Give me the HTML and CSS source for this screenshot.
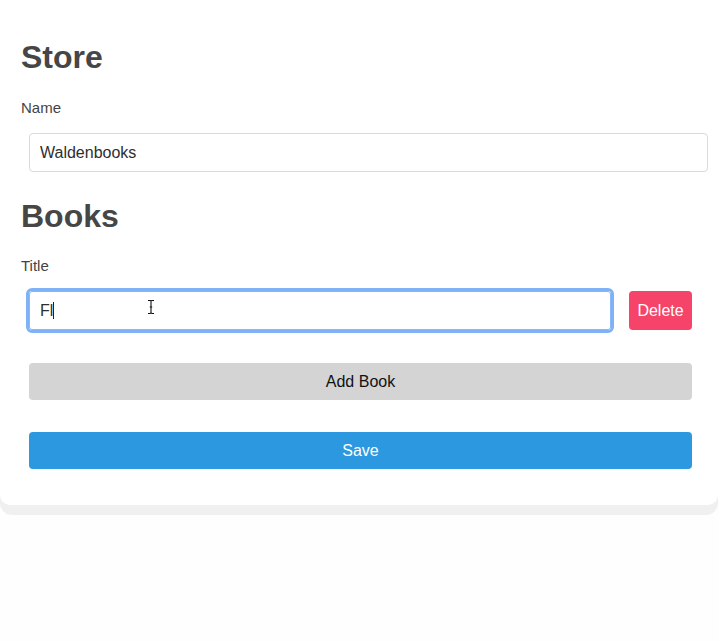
FILE: index.html
```html
<!DOCTYPE html>
<html lang="en">
<head>
<meta charset="utf-8">
<title>Store</title>
<link rel="stylesheet" href="styles.css">
</head>
<body>
<div class="card-shell">
<div class="card">
  <h2 class="heading">Store</h2>
  <label class="label label-name">Name</label>
  <input class="field field-wide" type="text" value="Waldenbooks">
  <h2 class="heading heading-books">Books</h2>
  <label class="label">Title</label>
  <div class="book-row">
    <div class="field-wrap">
      <input class="field field-focused" type="text" value="Fl">
      <span class="caret"></span>
      <svg class="ibeam" width="8" height="16" viewBox="0 0 8 16" aria-hidden="true">
        <path d="M1 1.5h2.2L4 2.3l.8-.8H7M4 2.3v11.4M1 14.5h2.2l.8-.8.8.8H7M2.8 8h2.4" fill="none" stroke="#111" stroke-width="1.1"/>
      </svg>
    </div>
    <button class="btn btn-delete" type="button">Delete</button>
  </div>
  <button class="btn btn-add" type="button">Add Book</button>
  <button class="btn btn-save" type="button">Save</button>
</div>
</div>
</body>
</html>
```

FILE: styles.css
```css
html, body {
  margin: 0;
  padding: 0;
  background: #fefefe;
  font-family: "Liberation Sans", Arial, Helvetica, sans-serif;
}

.card-shell {
  width: 718px;
  padding-bottom: 10px;
  background: #f0f0f0;
  border-radius: 0 0 12px 12px;
}

.card {
  box-sizing: border-box;
  background: #ffffff;
  border-radius: 0 0 10px 10px;
  padding: 38px 0 36px 21px;
  display: flex;
  flex-direction: column;
  align-items: flex-start;
}

.heading {
  margin: 0;
  font-size: 32px;
  line-height: 38px;
  font-weight: bold;
  color: #464646;
}

.heading-books {
  margin-top: 25px;
}

.label {
  display: block;
  margin-top: 21px;
  font-size: 15px;
  line-height: 18px;
  color: #444444;
}

.label-name {
  margin-top: 23px;
}

.heading-books + .label {
  margin-top: 22px;
}

.field {
  box-sizing: border-box;
  height: 39px;
  margin: 0;
  padding: 0 10px;
  border: 1px solid #dadada;
  border-radius: 4px;
  font-family: "Liberation Sans", Arial, Helvetica, sans-serif;
  font-size: 16px;
  color: #2e2e2e;
  background: #fff;
}

.field-wide {
  margin-top: 16px;
  margin-left: 8px;
  width: 679px;
}

.book-row {
  margin-top: 16px;
  margin-left: 8px;
  display: flex;
  gap: 18px;
}

.field-wrap {
  position: relative;
}

.field-focused {
  width: 582px;
  border-color: #8ab8f6;
  outline: 3px solid #7fb1f7;
  outline-offset: 0;
  border-radius: 3px;
}

.caret {
  position: absolute;
  left: 24px;
  top: 11px;
  width: 1px;
  height: 17px;
  background: #222;
}

.ibeam {
  position: absolute;
  left: 118px;
  top: 8px;
}

.btn {
  box-sizing: border-box;
  border: none;
  border-radius: 4px;
  font-family: "Liberation Sans", Arial, Helvetica, sans-serif;
  font-size: 16px;
  margin: 0;
  padding: 0;
  cursor: pointer;
}

.btn-delete {
  width: 63px;
  height: 39px;
  background: #f5436a;
  color: #ffffff;
}

.btn-add {
  margin-top: 33px;
  margin-left: 8px;
  width: 663px;
  height: 37px;
  background: #d4d4d4;
  color: #111;
}

.btn-save {
  margin-top: 32px;
  margin-left: 8px;
  width: 663px;
  height: 37px;
  background: #2c98df;
  color: #ffffff;
}
```
